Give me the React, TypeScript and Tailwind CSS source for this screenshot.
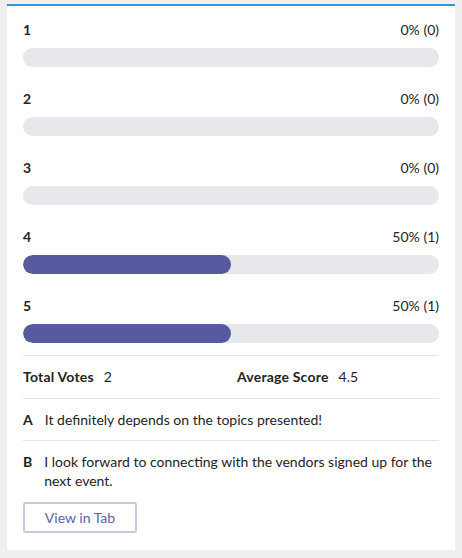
import React from 'react'

const rows = [
  { label: '1', pct: 0, count: 0 },
  { label: '2', pct: 0, count: 0 },
  { label: '3', pct: 0, count: 0 },
  { label: '4', pct: 50, count: 1 },
  { label: '5', pct: 50, count: 1 },
]

const answers = [
  { key: 'A', text: 'It definitely depends on the topics presented!' },
  { key: 'B', text: 'I look forward to connecting with the vendors signed up for the next event.' },
]

export default function App() {
  return (
    <div
      className="min-h-[558px] w-[462px] bg-[#f0efee] pt-[4px] pb-[8px] text-[14px] text-[#252423]"
      style={{ fontFamily: 'Lato, "Open Sans", sans-serif' }}
    >
      <div className="mx-[7px] border-t-2 border-[#2b9be0] bg-white px-4 pt-[14px] pb-[17px]">
        {/* Résultats par note */}
        <div className="flex flex-col gap-[22px]">
          {rows.map((r) => (
            <div key={r.label}>
              <div className="flex h-5 items-center justify-between leading-5">
                <span className="font-bold">{r.label}</span>
                <span>
                  {r.pct}% ({r.count})
                </span>
              </div>
              <div className="mt-2 h-[19px] w-full overflow-hidden rounded-full bg-[#e6e8eb]">
                <div className="h-full rounded-full bg-[#575a9e]" style={{ width: `${r.pct}%` }} />
              </div>
            </div>
          ))}
        </div>

        <div className="mt-3 border-t border-[#e5e4e3] py-[11px]">
          <div className="flex h-5 items-center leading-5">
            <div className="flex w-[214px] items-center gap-[10px]">
              <span className="font-bold tracking-[0.2px]">Total Votes</span>
              <span>2</span>
            </div>
            <div className="flex items-center gap-[10px]">
              <span className="font-bold tracking-[0.2px]">Average Score</span>
              <span>4.5</span>
            </div>
          </div>
        </div>

        {answers.map((a, i) => (
          <div
            key={a.key}
            className={`flex gap-3 border-t border-[#e5e4e3] leading-[19px] ${i === 0 ? 'py-[11px]' : 'pt-[11px]'}`}
          >
            <span className="font-bold">{a.key}</span>
            <span>{a.text}</span>
          </div>
        ))}

        <button className="mt-3 h-[31px] w-[114px] rounded-[3px] border-2 border-[#c8c9e4] bg-white text-[14px] text-[#5b5fa6]">
          View in Tab
        </button>
      </div>
    </div>
  )
}
